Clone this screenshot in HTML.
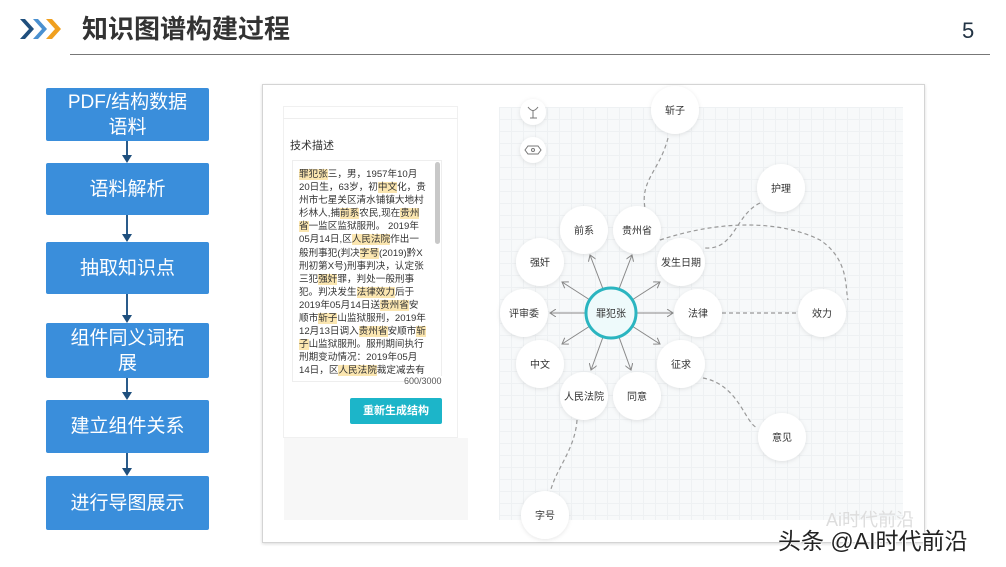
<!DOCTYPE html>
<html><head><meta charset="utf-8"><style>
*{margin:0;padding:0;box-sizing:border-box}
body{width:1006px;height:567px;background:#fff;position:relative;overflow:hidden;font-family:"Liberation Sans","Noto Sans CJK SC",sans-serif}
.title{position:absolute;left:82px;top:9px;font-size:26px;font-weight:bold;color:#333}
.num{position:absolute;left:962px;top:18px;font-size:22px;color:#234}
.hl{position:absolute;left:70px;top:54px;width:920px;height:1px;background:#777}
.box{position:absolute;left:46px;width:163px;background:#3a8edb;color:#fff;font-size:19px;text-align:center;display:flex;align-items:center;justify-content:center;line-height:25px;border-radius:2px}
.arr{position:absolute;left:126px;width:2px;background:#2a5b8a}
.arr:after{content:"";position:absolute;left:-4px;bottom:-2px;border-left:5px solid transparent;border-right:5px solid transparent;border-top:8px solid #1f4f7d}
.frame{position:absolute;left:262px;top:84px;width:663px;height:459px;border:1px solid #d4d4d4;box-shadow:0 1px 3px rgba(0,0,0,.15);background:#fff}
.lp{position:absolute;left:283px;top:106px;width:175px;height:332px;background:#fff;border:1px solid #f0f0f0}
.lp2{position:absolute;left:284px;top:438px;width:184px;height:82px;background:#f7f7f7}
.txt{position:absolute;left:292px;top:160px;width:150px;height:222px;border:1px solid #eee;padding:7px 0 0 6px;font-size:9.6px;line-height:13.1px;color:#333;overflow:hidden;white-space:nowrap}
.txt b{font-weight:normal;background:#fbe6b0}
.sb{position:absolute;left:435px;top:162px;width:5px;height:82px;background:#c8c8c8;border-radius:3px}
.btn{position:absolute;left:350px;top:398px;width:92px;height:26px;background:#1cb5c9;color:#fff;font-size:11px;font-weight:bold;text-align:center;line-height:26px;border-radius:2px}
.grid{position:absolute;left:499px;top:107px;width:404px;height:413px;background-color:#f7f9fa;background-image:linear-gradient(#eef1f3 1px,transparent 1px),linear-gradient(90deg,#eef1f3 1px,transparent 1px);background-size:12px 12px}
.wm{position:absolute;left:778px;top:522px;font-size:23px;color:#222;text-shadow:1px 1px 0 #fff,-1px -1px 0 #fff}
</style></head><body>
<svg style="position:absolute;left:18px;top:16px" width="50" height="26" viewBox="0 0 50 26">
<path d="M2 3 L11 13 L2 23 L7 23 L16 13 L7 3Z" fill="#1f4f7d"/>
<path d="M15 3 L24 13 L15 23 L20 23 L29 13 L20 3Z" fill="#4a90d0"/>
<path d="M28 3 L37 13 L28 23 L34 23 L43 13 L34 3Z" fill="#f0a020"/>
</svg>
<div class="title">知识图谱构建过程</div>
<div class="num">5</div>
<div class="hl"></div>

<div class="box" style="top:88px;height:53px">PDF/结构数据<br>语料</div>
<div class="arr" style="top:141px;height:20px"></div>
<div class="box" style="top:163px;height:52px">语料解析</div>
<div class="arr" style="top:215px;height:25px"></div>
<div class="box" style="top:242px;height:52px">抽取知识点</div>
<div class="arr" style="top:294px;height:27px"></div>
<div class="box" style="top:323px;height:55px">组件同义词拓<br>展</div>
<div class="arr" style="top:378px;height:20px"></div>
<div class="box" style="top:400px;height:53px">建立组件关系</div>
<div class="arr" style="top:453px;height:21px"></div>
<div class="box" style="top:476px;height:54px">进行导图展示</div>

<div class="frame"></div>
<div class="lp"></div>
<div style="position:absolute;left:283px;top:118px;width:175px;height:1px;background:#eee"></div>
<div style="position:absolute;left:290px;top:137px;font-size:11px;color:#333">技术描述</div>
<div class="txt"><b>罪犯张</b>三，男，1957年10月<br>20日生，63岁，初<b>中文</b>化，贵<br>州市七星关区清水铺镇大地村<br>杉林人,捕<b>前系</b>农民,现在<b>贵州</b><br><b>省</b>一监区监狱服刑。 2019年<br>05月14日,区<b>人民法院</b>作出一<br>般刑事犯(判决<b>字号</b>(2019)黔X<br>刑初第X号)刑事判决，认定张<br>三犯<b>强奸</b>罪，判处一般刑事<br>犯。判决发生<b>法律效力</b>后于<br>2019年05月14日送<b>贵州省</b>安<br>顺市<b>斩子</b>山监狱服刑，2019年<br>12月13日调入<b>贵州省</b>安顺市<b>斩</b><br><b>子</b>山监狱服刑。服刑期间执行<br>刑期变动情况：2019年05月<br>14日，区<b>人民法院</b>裁定减去有</div>
<div class="sb"></div>
<div style="position:absolute;left:404px;top:376px;font-size:9px;color:#555;background:#fff">600/3000</div>
<div class="btn">重新生成结构</div>
<div class="lp2"></div>

<div class="grid"></div>
<svg style="position:absolute;left:0;top:0" width="1006" height="567">
<defs><filter id="sh" x="-30%" y="-30%" width="160%" height="160%"><feDropShadow dx="0" dy="1" stdDeviation="2" flood-color="#000" flood-opacity="0.1"/></filter>
<marker id="ar" markerWidth="8" markerHeight="8" refX="6" refY="4" orient="auto"><path d="M0 0 L6 4 L0 8" fill="none" stroke="#888" stroke-width="1"/></marker></defs>
<g stroke="#999" stroke-width="1.2" fill="none" stroke-dasharray="4 3">
<path d="M668 138 C660 170,640 180,645 208"/>
<path d="M760 203 C735 215,735 250,705 248"/>
<path d="M660 240 C720 220,780 220,820 240 C850 260,845 290,848 300"/>
<path d="M722 313 L798 313"/>
<path d="M703 378 C740 385,745 425,758 428"/>
<path d="M577 420 C575 450,555 470,550 493"/>
</g>
<g stroke="#888" stroke-width="1" marker-end="url(#ar)">
<line x1="603" y1="289" x2="590" y2="255"/>
<line x1="619" y1="289" x2="632" y2="255"/>
<line x1="632" y1="300" x2="660" y2="282"/>
<line x1="637" y1="313" x2="673" y2="313"/>
<line x1="632" y1="326" x2="660" y2="344"/>
<line x1="619" y1="337" x2="631" y2="370"/>
<line x1="603" y1="337" x2="591" y2="370"/>
<line x1="590" y1="326" x2="562" y2="344"/>
<line x1="585" y1="313" x2="550" y2="313"/>
<line x1="590" y1="300" x2="562" y2="282"/>
</g>
<g fill="#fff" filter="url(#sh)">
<circle cx="533" cy="112" r="13"/><circle cx="533" cy="150" r="13"/>
<circle cx="675" cy="110" r="24"/><circle cx="781" cy="188" r="24"/>
<circle cx="584" cy="230" r="24"/><circle cx="637" cy="230" r="24"/>
<circle cx="540" cy="262" r="24"/><circle cx="681" cy="262" r="24"/>
<circle cx="524" cy="313" r="24"/><circle cx="698" cy="313" r="24"/><circle cx="822" cy="313" r="24"/>
<circle cx="540" cy="364" r="24"/><circle cx="681" cy="364" r="24"/>
<circle cx="584" cy="396" r="24"/><circle cx="637" cy="396" r="24"/>
<circle cx="782" cy="437" r="24"/><circle cx="545" cy="515" r="24"/>
</g>
<circle cx="611" cy="313" r="25" fill="#eefafb" stroke="#2bb5c0" stroke-width="3"/>
<path d="M528 146 L538 146 L541 150 L538 154 L528 154 L525 150Z" fill="none" stroke="#777" stroke-width="1"/><circle cx="533" cy="150" r="1.5" fill="none" stroke="#777"/>
<path d="M528 107 Q533 114 538 107 M533 111 L533 118 M530 118 L537 118" fill="none" stroke="#777" stroke-width="1"/>
<g font-size="10" fill="#333" text-anchor="middle" font-family="Liberation Sans,Noto Sans CJK SC,sans-serif">
<text x="675" y="114">斩子</text><text x="781" y="192">护理</text>
<text x="584" y="234">前系</text><text x="637" y="234">贵州省</text>
<text x="540" y="266">强奸</text><text x="681" y="266">发生日期</text>
<text x="524" y="317">评审委</text><text x="611" y="317">罪犯张</text><text x="698" y="317">法律</text><text x="822" y="317">效力</text>
<text x="540" y="368">中文</text><text x="681" y="368">征求</text>
<text x="584" y="400">人民法院</text><text x="637" y="400">同意</text>
<text x="782" y="441">意见</text><text x="545" y="519">字号</text>
</g>
</svg>
<div style="position:absolute;left:826px;top:506px;font-size:18px;color:#ddd">Ai时代前沿</div>
<div class="wm">头条 @AI时代前沿</div>
</body></html>
